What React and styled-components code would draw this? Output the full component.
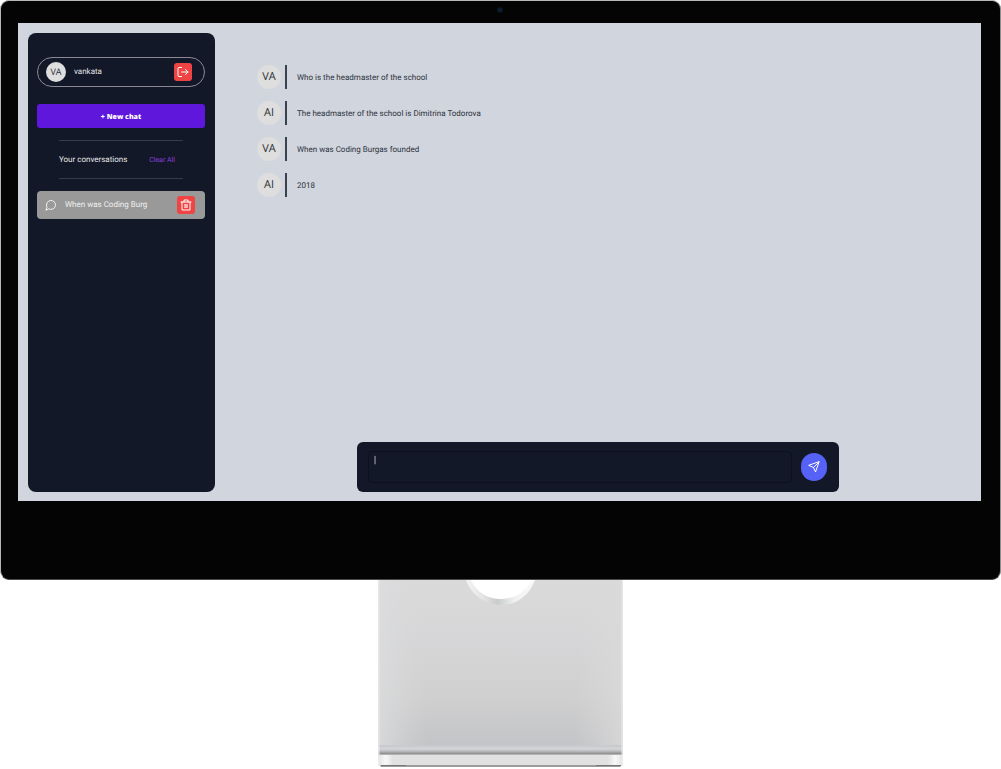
import React from "react";
import styled, { createGlobalStyle } from "styled-components";

const Global = createGlobalStyle`
  *, *::before, *::after { box-sizing: border-box; }
  body {
    margin: 0;
    background: #fff;
    font-family: Roboto, "Noto Sans", sans-serif;
    line-height: 12px;
    text-rendering: geometricPrecision;
  }
  button, textarea { font-family: inherit; text-rendering: inherit; }
`;

const Page = styled.div`
  display: flex;
  flex-direction: column;
  align-items: center;
`;

const Monitor = styled.div`
  width: 100%;
  padding: 0 19px 78px 17px;
  background: #040404;
  border: 1px solid #b4b8b6;
  border-bottom-color: #4a4a4a;
  border-right-color: #8d8d8d;
  border-radius: 9px;
`;

const CameraBar = styled.div`
  display: flex;
  align-items: center;
  justify-content: center;
  height: 22px;
  padding-bottom: 4px;
`;

const Camera = styled.span`
  width: 6px;
  height: 6px;
  border-radius: 50%;
  background: radial-gradient(circle, #0a2038 20%, #0a0d12 80%);
`;

const Screen = styled.div`
  display: flex;
  min-height: 478px;
  padding: 10px 0 9px 10px;
  background: #d1d5dd;
`;

const Sidebar = styled.aside`
  display: flex;
  flex-direction: column;
  flex: none;
  width: 187px;
  padding: 24px 10px 24px 9px;
  background: #121827;
  border-radius: 8px;
`;

const UserPill = styled.div`
  display: flex;
  align-items: center;
  height: 30px;
  margin-bottom: 17px;
  padding: 0 12px 0 8px;
  border: 1px solid #8b8a94;
  border-radius: 15px;
`;

const Avatar = styled.span`
  display: flex;
  align-items: center;
  justify-content: center;
  flex: none;
  width: ${(p) => p.$size}px;
  height: ${(p) => p.$size}px;
  border-radius: 50%;
  background: #dedede;
  color: #2b2f36;
  font-family: "Open Sans", sans-serif;
  font-size: ${(p) => (p.$size > 20 ? 11 : 9)}px;
`;

const UserName = styled.span`
  flex: 1;
  margin-left: 8px;
  color: #e2e3e6;
  font-size: 8px;
`;

const RedButton = styled.button`
  display: flex;
  align-items: center;
  justify-content: center;
  width: 18px;
  height: 18px;
  padding: 0;
  border: 0;
  border-radius: 3px;
  background: #ee4444;
  color: #fff;
`;

const NewChat = styled.button`
  height: 24px;
  padding: 2px 0 0;
  border: 0;
  border-radius: 3px;
  background: #6017dc;
  color: #fff;
  font-family: "Open Sans", sans-serif;
  font-size: 7px;
  font-weight: 800;
`;

const ListHeader = styled.div`
  display: flex;
  align-items: center;
  justify-content: space-between;
  height: 39px;
  margin: 12px 22px;
  padding: 1px 8px 0 0;
  border: solid #353b47;
  border-width: 1px 0;
`;

const ListTitle = styled.h2`
  margin: 0;
  color: #e6e7ea;
  font-size: 8px;
  font-weight: 400;
`;

const ClearAll = styled.button`
  padding: 0;
  border: 0;
  background: none;
  color: #8a3fdc;
  font-size: 7px;
  line-height: 12px;
`;

const Conversation = styled.div`
  display: flex;
  align-items: center;
  height: 28px;
  padding: 0 10px 0 8px;
  border-radius: 4px;
  background: #999;
  color: #f1f1f1;
`;

const ConversationLink = styled.a`
  display: flex;
  align-items: center;
  flex: 1;
  gap: 8px;
  color: inherit;
  font-size: 8px;
  text-decoration: none;
`;

const Main = styled.main`
  display: flex;
  flex-direction: column;
  justify-content: space-between;
  flex: 1;
  min-width: 0;
`;

const Messages = styled.ul`
  display: flex;
  flex-direction: column;
  gap: 12px;
  margin: 0;
  padding: 32px 42px;
  list-style: none;
`;

const Message = styled.li`
  display: flex;
  align-items: center;
  gap: 4px;
`;

const MessageText = styled.p`
  display: flex;
  align-items: center;
  min-height: 24px;
  margin: 0;
  padding: 2px 0 0 10px;
  border-left: 2px solid #3a404c;
  color: #2b3240;
  font-size: 8px;
`;

const Composer = styled.form`
  display: flex;
  align-items: center;
  align-self: center;
  gap: 9px;
  width: 63%;
  height: 50px;
  padding: 0 12px 0 11px;
  border-radius: 6px;
  background: #121827;
`;

const Prompt = styled.textarea`
  flex: 1;
  min-width: 0;
  height: 32px;
  padding: 4px 5px;
  border: 1px solid #0c111d;
  border-radius: 4px;
  outline: 0;
  resize: none;
  background: #121827;
  color: #c9ccd2;
  font-size: 10px;
  line-height: 10px;

  &::placeholder { color: #c9ccd2; }
`;

const Send = styled.button`
  display: flex;
  align-items: center;
  justify-content: center;
  width: 26px;
  height: 28px;
  padding: 0;
  border: 0;
  border-radius: 13px;
  background: #5661f6;
  color: #fff;
`;

const StandArt = styled.svg`
  display: block;
  width: 246px;
  height: 189px;
`;

const Glyph = ({ size, stroke = 2, children }) => (
  <svg
    width={size}
    height={size}
    viewBox="0 0 24 24"
    fill="none"
    stroke="currentColor"
    strokeWidth={stroke}
    strokeLinecap="round"
    strokeLinejoin="round"
    aria-hidden="true"
  >
    {children}
  </svg>
);

const Stand = () => (
  <StandArt viewBox="0 0 246 189" aria-hidden="true">
    <defs>
      <linearGradient id="plate" x1="0" y1="0" x2="0" y2="1">
        <stop offset="0" stopColor="#dadada" />
        <stop offset="0.35" stopColor="#d6d6d8" />
        <stop offset="0.7" stopColor="#d0d0d0" />
        <stop offset="1" stopColor="#c3c4c7" />
      </linearGradient>
      <linearGradient id="sides" x1="0" y1="0" x2="1" y2="0">
        <stop offset="0" stopColor="#dcdddf" stopOpacity="0.8" />
        <stop offset="0.2" stopColor="#d8d8d8" stopOpacity="0" />
        <stop offset="0.8" stopColor="#d8d8d8" stopOpacity="0" />
        <stop offset="1" stopColor="#dadada" stopOpacity="0.8" />
      </linearGradient>
      <linearGradient id="fold" x1="0" y1="0" x2="0" y2="1">
        <stop offset="0" stopColor="#c6c7ca" />
        <stop offset="0.4" stopColor="#d5d6d8" />
        <stop offset="0.65" stopColor="#b5b6b8" />
        <stop offset="0.85" stopColor="#929395" />
        <stop offset="1" stopColor="#c2c2c3" />
      </linearGradient>
      <linearGradient id="foot" x1="0" y1="0" x2="1" y2="0">
        <stop offset="0" stopColor="#e4e4e4" />
        <stop offset="0.03" stopColor="#f8f8f8" />
        <stop offset="0.06" stopColor="#e1e1e1" />
        <stop offset="0.94" stopColor="#e1e1e1" />
        <stop offset="0.97" stopColor="#f8f8f8" />
        <stop offset="1" stopColor="#e4e4e4" />
      </linearGradient>
      <linearGradient id="rim" x1="0" y1="0" x2="1" y2="0">
        <stop offset="0" stopColor="#f4f4f4" />
        <stop offset="0.25" stopColor="#e4e4e4" />
        <stop offset="0.45" stopColor="#c9cccc" />
        <stop offset="0.7" stopColor="#f0f0f0" />
        <stop offset="1" stopColor="#fafafa" />
      </linearGradient>
    </defs>
    <rect x="0.500" width="244" height="166" fill="url(#plate)" />
    <rect x="0.500" width="244" height="166" fill="url(#sides)" />
    <path d="M88 0C94 16 108 25 123 25S151 16 157 0Z" fill="url(#rim)" />
    <path d="M93 0C98 12 110 19 123 19S148 12 154 0Z" fill="#fff" />
    <rect x="0.500" y="165" width="244" height="10" fill="url(#fold)" />
    <rect x="0.500" y="175" width="244" height="11" fill="url(#foot)" />
    <rect x="2.500" y="185" width="240" height="2" fill="#9b9d9d" />
    <path d="M3 185.500H28M218 185.500H243" stroke="#777" />
    <path d="M1 0V186M244 0V186" stroke="#e8e8e8" />
  </StandArt>
);

const messages = [
  ["VA", "Who is the headmaster of the school"],
  ["AI", "The headmaster of the school is Dimitrina Todorova"],
  ["VA", "When was Coding Burgas founded"],
  ["AI", "2018"],
];

export default function App() {
  return (
    <Page>
      <Global />
      <Monitor>
        <CameraBar><Camera /></CameraBar>
        <Screen>
          <Sidebar>
            <UserPill>
              <Avatar $size={20}>VA</Avatar>
              <UserName>vankata</UserName>
              <RedButton type="button" aria-label="Log out">
                <Glyph size={12}>
                  <path d="M9 21H4a2 2 0 0 1-2-2V5a2 2 0 0 1 2-2h5M17 17l5-5-5-5M22 12H9" />
                </Glyph>
              </RedButton>
            </UserPill>
            <NewChat type="button">+ New chat</NewChat>
            <ListHeader>
              <ListTitle>Your conversations</ListTitle>
              <ClearAll type="button">Clear All</ClearAll>
            </ListHeader>
            <Conversation>
              <ConversationLink href="#conversation">
                <Glyph size={12}>
                  <path d="M7.900 20A9 9 0 1 0 4 16.100L2 22Z" />
                </Glyph>
                When was Coding Burg
              </ConversationLink>
              <RedButton type="button" aria-label="Delete conversation">
                <Glyph size={12}>
                  <path d="M2 6h20M8 6V2h8v4M4 6v16h16V6" />
                  <path d="M9 11h6v6H9z" fill="currentColor" opacity="0.6" />
                </Glyph>
              </RedButton>
            </Conversation>
          </Sidebar>
          <Main>
            <Messages>
              {messages.map(([who, text]) => (
                <Message key={text}>
                  <Avatar $size={24}>{who}</Avatar>
                  <MessageText>{text}</MessageText>
                </Message>
              ))}
            </Messages>
            <Composer onSubmit={(e) => e.preventDefault()}>
              <Prompt aria-label="Message" placeholder="|" />
              <Send type="submit" aria-label="Send">
                <Glyph size={12} stroke={2}>
                  <path d="M22 2L11 13M22 2l-7 20-4-9-9-4z" />
                </Glyph>
              </Send>
            </Composer>
          </Main>
        </Screen>
      </Monitor>
      <Stand />
    </Page>
  );
}
